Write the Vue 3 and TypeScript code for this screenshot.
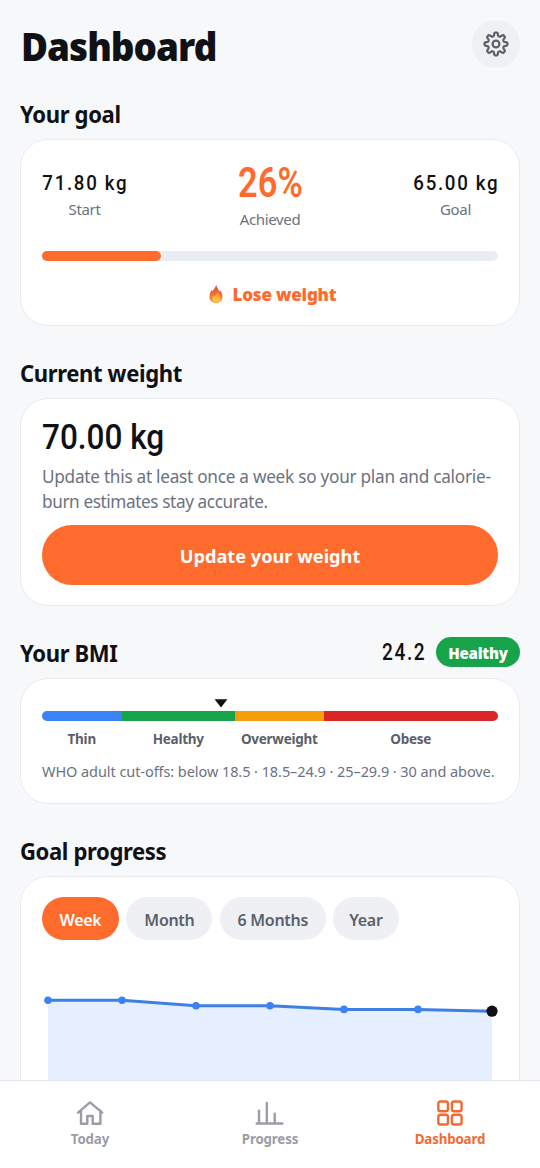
<script setup lang="ts">
const bands = [
  { name: 'Thin', share: 79.5, color: '#3b82f6' },
  { name: 'Healthy', share: 113.5, color: '#16a34a' },
  { name: 'Overweight', share: 88.5, color: '#f59e0b' },
  { name: 'Obese', share: 174.5, color: '#dc2626' },
]
const ranges = ['Week', 'Month', '6 Months', 'Year']
const active = 'Week'
const points = [
  { x: 6, y: 20.3 },
  { x: 80, y: 20.3 },
  { x: 154, y: 25.8 },
  { x: 228, y: 25.8 },
  { x: 302, y: 29.4 },
  { x: 376, y: 29.4 },
  { x: 450, y: 31.2 },
]
const line = points.map((p) => `${p.x},${p.y}`).join(' ')
const area = `6,220 ${line} 450,220`
const last = points[points.length - 1]
const toothed = (() => {
  const pts: string[] = []
  const steps = 160
  for (let i = 0; i < steps; i++) {
    const a = (i / steps) * Math.PI * 2
    const wave = Math.cos(a * 8)
    const r = 9.8 + 1.75 * Math.tanh(wave * 2)
    pts.push(`${(14 + r * Math.sin(a)).toFixed(2)},${(14 - r * Math.cos(a)).toFixed(2)}`)
  }
  return pts.join(' ')
})()
</script>

<template>
  <div class="screen">
    <main class="content">
      <header class="top">
        <h1>Dashboard</h1>
        <button class="gear" aria-label="Settings">
          <svg width="28" height="28" viewBox="0 0 28 28">
            <polygon :points="toothed" />
            <circle cx="14" cy="14" r="3.4" />
          </svg>
        </button>
      </header>

      <div class="head first"><h2>Your goal</h2></div>
      <section class="card goal">
        <div class="stats">
          <div class="stat">
            <span class="num small">71.80 kg</span>
            <span class="cap">Start</span>
          </div>
          <div class="stat mid">
            <span class="num big">26%</span>
            <span class="cap">Achieved</span>
          </div>
          <div class="stat">
            <span class="num small">65.00 kg</span>
            <span class="cap">Goal</span>
          </div>
        </div>
        <div class="track"><div class="fill"></div></div>
        <div class="lose">
          <svg width="16" height="20" viewBox="0 0 16 20">
            <defs>
              <linearGradient id="flame" x1="0" y1="0" x2="0" y2="1">
                <stop offset="0" stop-color="#d94a38" />
                <stop offset=".55" stop-color="#ef7438" />
                <stop offset="1" stop-color="#f9a13c" />
              </linearGradient>
              <linearGradient id="core" x1="0" y1="0" x2="0" y2="1">
                <stop offset="0" stop-color="#f58a34" />
                <stop offset="1" stop-color="#ffd83d" />
              </linearGradient>
            </defs>
            <path d="M8.200.800c.3 2.200 1.600 3.200 2.300 4.900.3.700.5 1.300.6 2 .5-.4.700-1 .7-1.700 1.700 1.700 2.700 4 2.700 6.500 0 4.200-2.700 6.600-6.500 6.600S1.400 16.700 1.400 12.800c0-3 1.100-5.300 2.500-7l.5 1.500C5.400 5.200 7.600 3.900 8.200.800z" fill="url(#flame)" />
            <path d="M9.500 7.500c.4 2 3 3.400 3 6.500 0 2.600-1.700 4.300-4.200 4.300S4.200 16.700 4.200 14.400c0-1.700.8-2.700 1.700-3.500l.6 1.300c1.500-.9 2.700-2.400 3-4.700z" fill="url(#core)" />
          </svg>
          <span>Lose weight</span>
        </div>
      </section>

      <div class="head"><h2>Current weight</h2></div>
      <section class="card weight">
        <div class="num current">70.00 kg</div>
        <p>Update this at least once a week so your plan and calorie-<br /><span class="tail">burn estimates stay accurate.</span></p>
        <button class="cta">Update your weight</button>
      </section>

      <div class="head">
        <h2>Your BMI</h2>
        <div class="bmi-val">
          <span class="num bmi-num">24.2</span>
          <span class="badge">Healthy</span>
        </div>
      </div>
      <section class="card bmi">
        <div class="scale">
          <svg class="marker" width="14" height="9" viewBox="0 0 14 9"><path d="M.6.300h12.800L7 8.500z" fill="#101114" /></svg>
          <div class="bar">
            <i v-for="b in bands" :key="b.name" :style="{ flexGrow: b.share, background: b.color }"></i>
          </div>
        </div>
        <div class="labels">
          <span v-for="b in bands" :key="b.name" :style="{ flexGrow: b.share }">{{ b.name }}</span>
        </div>
        <div class="who">WHO adult cut-offs: below 18.5 · 18.5–24.9 · 25–29.9 · 30 and above.</div>
      </section>

      <div class="head"><h2>Goal progress</h2></div>
      <section class="card progress">
        <div class="pills">
          <button v-for="(r, i) in ranges" :key="r" :class="['pill', 'p' + i, { on: r === active }]">{{ r }}</button>
        </div>
        <svg class="chart" width="456" height="220" viewBox="0 0 456 220">
          <polygon :points="area" fill="#e5efff" />
          <polyline :points="line" fill="none" stroke="#3e7fe6" stroke-width="3" stroke-linejoin="round" />
          <circle v-for="p in points" :key="p.x" :cx="p.x" :cy="p.y" r="3.8" fill="#3b82f6" />
          <circle :cx="last.x" :cy="last.y" r="5.6" fill="#101114" />
        </svg>
      </section>
    </main>

    <nav class="tabs">
      <a class="tab">
        <svg width="30" height="30" viewBox="0 0 30 30">
          <path d="M3 14.600 15 4.400l12.200 10.200M6 12.500V25.800h6.300V18h5.400v7.800h7.700V12.500" />
        </svg>
        <span>Today</span>
      </a>
      <a class="tab">
        <svg width="30" height="30" viewBox="0 0 30 30">
          <path d="M1.700 25.500h25.600M4 25V12.600M11.800 25V5M19.700 25V15.600" />
        </svg>
        <span>Progress</span>
      </a>
      <a class="tab on">
        <svg width="30" height="30" viewBox="0 0 30 30">
          <rect x="3.300" y="3.500" width="9.700" height="9.700" rx="2.300" />
          <rect x="16.900" y="3.500" width="9.700" height="9.700" rx="2.300" />
          <rect x="3.300" y="16.800" width="9.700" height="9.700" rx="2.300" />
          <rect x="16.900" y="16.800" width="9.700" height="9.700" rx="2.300" />
        </svg>
        <span>Dashboard</span>
      </a>
    </nav>
  </div>
</template>

<style>
body {
  margin: 0;
  background: #f7f8fa;
}
</style>

<style scoped>
* {
  box-sizing: border-box;
}
.screen {
  height: 1168px;
  width: 540px;
  overflow: hidden;
  display: flex;
  flex-direction: column;
  background: #f7f8fa;
  color: #101114;
  font-family: 'Noto Sans', 'Open Sans', sans-serif;
}
.content {
  flex: 1;
  min-height: 0;
  overflow: hidden;
  padding: 20px 20px 0;
}
button {
  border: 0;
  padding: 0;
  font-family: inherit;
}
.top {
  height: 48px;
  display: flex;
  align-items: center;
  justify-content: space-between;
}
h1 {
  margin: 0;
  padding: 3px 0 0 1px;
  font-size: 38px;
  font-weight: 900;
  line-height: 48px;
  letter-spacing: -1px;
  transform: scaleX(0.97);
  transform-origin: 0 0;
}
.gear {
  width: 48px;
  height: 48px;
  border-radius: 50%;
  background: #eef0f4;
  display: grid;
  place-items: center;
}
.gear svg {
  fill: none;
  stroke: #5b606b;
  stroke-width: 2.200;
  stroke-linejoin: round;
}
.head {
  height: 72px;
  padding: 31px 0 0;
  display: flex;
  justify-content: space-between;
}
.head.first {
  height: 71px;
  padding-top: 30px;
}
h2 {
  margin: 0;
  font-size: 23px;
  line-height: 32px;
  font-weight: 700;
  letter-spacing: -0.4px;
  white-space: nowrap;
  transform: scaleX(0.96);
  transform-origin: 0 0;
}
.card {
  background: #fff;
  border: 1.500px solid #e9ebef;
  border-radius: 28px;
  padding: 0 21px;
}
.num {
  font-family: Roboto, sans-serif;
  font-weight: 500;
  white-space: nowrap;
}
.goal {
  height: 187px;
}
.stats {
  display: flex;
  justify-content: space-between;
  height: 111px;
}
.stat {
  width: 85px;
  display: flex;
  flex-direction: column;
  align-items: center;
  padding-top: 29px;
}
.mid {
  padding-top: 17px;
}
.small {
  font-size: 21px;
  line-height: 28px;
  letter-spacing: 1.900px;
  margin-right: -1.900px;
  transform: scaleX(0.89);
}
.big {
  font-size: 43px;
  font-weight: 600;
  line-height: 50px;
  color: #ff6b2c;
  transform: scaleX(0.8);
}
.cap {
  margin-top: 1px;
  font-size: 15px;
  line-height: 22px;
  letter-spacing: -0.350px;
  color: #6b7280;
}
.track {
  height: 10px;
  border-radius: 5px;
  background: #e9ecf1;
}
.fill {
  width: 26%;
  height: 100%;
  border-radius: 5px;
  background: #ff6b2c;
}
.lose {
  display: flex;
  justify-content: center;
  align-items: center;
  gap: 9px;
  margin-top: 20px;
  padding-left: 4px;
  height: 26px;
  color: #ff6b2c;
  font-size: 17px;
  font-weight: 900;
  letter-spacing: -0.200px;
}
.weight {
  height: 208px;
}
.current {
  font-size: 35px;
  line-height: 44px;
  padding-top: 17px;
  transform: scaleX(0.9);
  transform-origin: 0 0;
}
p {
  margin: 4px 0 11px;
  font-size: 17.200px;
  line-height: 25px;
  letter-spacing: -0.260px;
  color: #6b7280;
  white-space: nowrap;
}
.tail {
  letter-spacing: -0.400px;
}
.cta {
  width: 100%;
  height: 60px;
  border-radius: 30px;
  background: #ff6b2c;
  color: #fff;
  font-size: 18.200px;
  padding-top: 1px;
  font-weight: 700;
}
.bmi-val {
  display: flex;
  height: 30px;
  align-items: center;
  gap: 10px;
}
.bmi-num {
  font-size: 23px;
  letter-spacing: 1.900px;
  transform: scaleX(0.83);
  transform-origin: 100% 0;
}
.badge {
  width: 84px;
  height: 30px;
  border-radius: 15px;
  background: #16a34a;
  color: #fff;
  font-weight: 900;
  font-size: 15px;
  line-height: 32px;
  letter-spacing: -0.200px;
  text-align: center;
}
.bmi {
  height: 126px;
}
.scale {
  position: relative;
  padding-top: 32px;
}
.marker {
  position: absolute;
  left: 172px;
  top: 20px;
}
.bar {
  display: flex;
  height: 10px;
  border-radius: 5px;
  overflow: hidden;
}
.bar i {
  flex-basis: 0;
}
.labels {
  display: flex;
  margin-top: 8px;
  font-size: 13.500px;
  line-height: 20px;
  letter-spacing: -0.260px;
  font-weight: 700;
  color: #5b606b;
}
.labels span {
  flex-basis: 0;
  width: 0;
  text-align: center;
  white-space: nowrap;
}
.who {
  margin-top: 11px;
  font-size: 14.500px;
  line-height: 22px;
  letter-spacing: -0.070px;
  color: #6b7280;
  white-space: nowrap;
}
.progress {
  height: 400px;
  padding-top: 20px;
}
.pills {
  display: flex;
  gap: 7.400px;
}
.pill {
  height: 43px;
  border-radius: 22px;
  background: #eef0f4;
  color: #5b606b;
  font-size: 16px;
  font-weight: 600;
  letter-spacing: -0.300px;
  padding-top: 2px;
  white-space: nowrap;
}
.pill.on {
  background: #ff6b2c;
  color: #fff;
}
.p0 { width: 77px; }
.p1 { width: 86px; }
.p2 { width: 106px; }
.p3 { width: 65.500px; }
.chart {
  display: block;
  margin-top: 40px;
}
.tabs {
  height: 88px;
  background: #fff;
  border-top: 1px solid #e3e5e9;
  display: grid;
  grid-template-columns: repeat(3, 1fr);
}
.tab {
  display: flex;
  flex-direction: column;
  align-items: center;
  padding-top: 17px;
  color: #9a9da8;
  font-size: 13.300px;
  line-height: 22px;
  letter-spacing: -0.150px;
  font-weight: 700;
}
.tab svg {
  fill: none;
  stroke: currentColor;
  stroke-width: 2.400;
  stroke-linejoin: round;
  stroke-linecap: round;
}
.tab.on {
  color: #f26a32;
}
</style>
